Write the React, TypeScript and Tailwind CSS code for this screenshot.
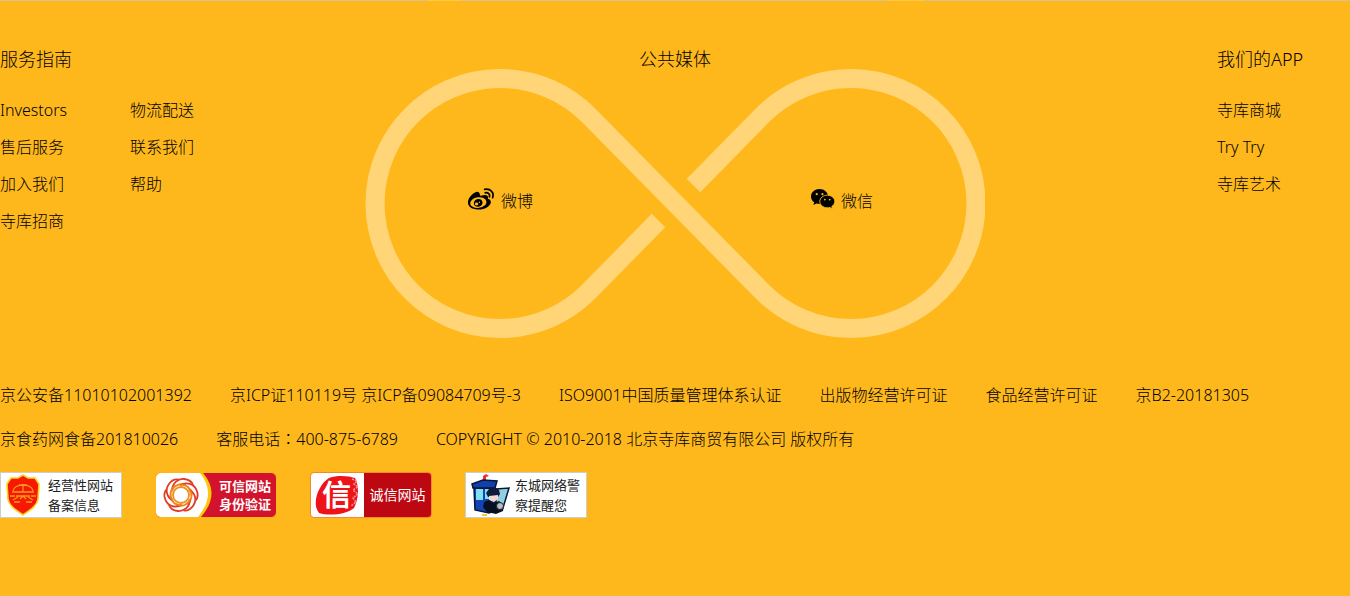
import type { ReactNode } from "react";

const guideLinks: string[][] = [
  ["Investors", "售后服务", "加入我们", "寺库招商"],
  ["物流配送", "联系我们", "帮助"],
];
const appLinks = ["寺库商城", "Try Try", "寺库艺术"];
const licences: { id: string; items: ReactNode[] }[] = [
  {
    id: "registrations",
    items: ["京公安备11010102001392", "京ICP证110119号 京ICP备09084709号-3", "ISO9001中国质量管理体系认证", "出版物经营许可证", "食品经营许可证", "京B2-20181305"],
  },
  {
    id: "contact",
    items: [
      "京食药网食备201810026",
      <>客服电话<span className="font-['Noto_Sans_CJK_TC',sans-serif] leading-none" lang="zh-Hant">：</span>400-875-6789</>,
      "COPYRIGHT © 2010-2018 北京寺库商贸有限公司 版权所有",
    ],
  },
];

function LinkList({ items }: { items: string[] }) {
  return (
    <ul>
      {items.map((t) => (
        <li key={t} className="h-[37px] leading-[37px]">
          <a href="#" className="whitespace-nowrap">{t}</a>
        </li>
      ))}
    </ul>
  );
}

function Loop() {
  return (
    <svg viewBox="0 0 620 270" className="absolute top-[26px] left-0 w-full" fill="none" stroke="#ffd577" strokeWidth="19" aria-hidden="true">
      <path d="M293.5 151.5 L223.4 222.9 A125 125 0 1 1 223.4 46.1 L397.6 222.9 A125 125 0 1 0 397.6 46.1 L328.5 116.5" />
    </svg>
  );
}

function WeiboIcon() {
  return (
    <svg viewBox="0 0 28 22" className="h-[22px] w-7" aria-hidden="true">
      <path d="M12 4.6C10.3 2.4 5.8 5.2 2.9 9C-1.2 14.4 1 21.3 10.8 21.6C18.6 21.8 24.4 17.4 23.8 13.4C23.5 11.7 22 11.1 20.8 10.7C21.6 8.3 20.6 5.5 13.8 7.7C12.6 8.1 13.2 6.2 12 4.6Z" />
      <ellipse cx="11.3" cy="14.6" rx="8.2" ry="5.3" fill="#ffb81c" transform="rotate(-8 11.3 14.6)" />
      <ellipse cx="11.2" cy="14.9" rx="4.4" ry="3.9" transform="rotate(-20 11.2 14.9)" />
      <ellipse cx="9.6" cy="16" rx="1.7" ry="1.4" fill="#ffb81c" />
      <circle cx="12.4" cy="14.2" r=".7" fill="#ffb81c" />
      <path d="M17.6 1.4C23.3 .1 27.4 4.5 25.6 9.6M18.2 4.8C21.2 4.2 23.2 6.2 22.4 8.8" fill="none" stroke="#000" strokeWidth="1.7" strokeLinecap="round" />
    </svg>
  );
}

function WechatIcon() {
  return (
    <svg viewBox="0 0 24 20" className="h-5 w-6" aria-hidden="true">
      <path d="M8.5 0C3.8 0 0 3.3 0 7.4C0 9.8 1.2 11.8 3.2 13.2L2.4 16L5.5 14.4C6.5 14.7 7.4 14.9 8.5 14.9C13.2 14.9 17 11.5 17 7.4S13.2 0 8.5 0Z" />
      <path d="M16.3 6.2C12.1 6.2 8.8 9 8.8 12.5S12.1 18.8 16.3 18.8C17.2 18.8 18 18.7 18.8 18.4L21.5 19.8L20.8 17.4C22.6 16.3 23.8 14.5 23.8 12.5C23.8 9 20.5 6.2 16.3 6.2Z" stroke="#ffb81c" strokeWidth=".9" />
      <circle cx="5.7" cy="5.2" r="1.1" fill="#ffb81c" />
      <circle cx="11.4" cy="5.2" r="1.1" fill="#ffb81c" />
      <circle cx="13.9" cy="10.6" r=".9" fill="#ffb81c" />
      <circle cx="18.7" cy="10.6" r=".9" fill="#ffb81c" />
    </svg>
  );
}

function ShieldArt() {
  return (
    <svg viewBox="0 0 34 42" className="h-[42px] w-[34px]" aria-hidden="true">
      <path d="M17 1L22 4L29 4L33 10L32 25C31 32 24 36 17 41C10 36 3 32 2 25L1 10L5 4L12 4Z" fill="#f61800" stroke="#ffd21c" strokeWidth="1.6" />
      <g fill="none" stroke="#ff9b16" strokeWidth="1.3">
        <path d="M7 17C8 9 26 9 27 17M13 11H21M17 10V18M6 18H28M10 22H24M7 26L12 23M27 26L22 23M8 28H14M20 28H26M14 25L17 22L20 25M4 22H9M25 22H30" />
      </g>
    </svg>
  );
}

function TrustedArt() {
  return (
    <svg viewBox="0 0 58 44" className="h-11 w-[58px]" aria-hidden="true">
      <path d="M0 0H47Q65 21 45 44H0Z" fill="#fdc70c" />
      <path d="M0 0H44Q61 21 42 44H0Z" fill="#fff" />
      <g fill="none" strokeWidth="1.8" transform="translate(25 22)">
        <circle r="8" stroke="#f0901f" />
        {[0, 60, 120, 180, 240, 300].map((a) => (
          <g key={a} transform={`rotate(${a})`}>
            <path d="M-9 -4C-9 -12 -3 -16.5 3 -16C8 -15.5 11 -13 12 -10" stroke="#e23b25" />
            <path d="M-9 -4C-7 -10 -1 -12 5 -10" stroke="#f0831d" />
          </g>
        ))}
      </g>
    </svg>
  );
}

function SealArt() {
  return (
    <svg viewBox="0 0 53 44" className="h-11 w-[53px]" aria-hidden="true">
      <path d="M18 5C27 2 37 3 44 5C49 15 47 27 43 35C35 42 17 43 8 40C0 30 8 11 18 5Z" fill="#ee1219" />
      <path d="M41 6L46 8L43 11L47 14L42 17L47 21L42 25L45 29L40 33" fill="none" stroke="#f49a9d" strokeWidth="1.5" strokeDasharray="2 1" />
      <text x="11" y="33" fontSize="29" fontWeight="700" fill="#fff">信</text>
    </svg>
  );
}

function PoliceArt() {
  return (
    <svg viewBox="0 0 40 42" className="h-[42px] w-10" aria-hidden="true">
      <path d="M12 7V2L15 0L18 2L15 3V7Z" fill="#f32b29" />
      <path d="M3 14H24V36L18 39L4 36Z" fill="#1542b5" stroke="#071536" strokeWidth="1.5" />
      <path d="M5 15H12V26H5Z M14 15H21V25H14Z" fill="#80e1f1" />
      <path d="M1 10L12 6L26 7L24 14H2Z" fill="#123fa9" stroke="#071536" strokeWidth="1.5" />
      <path d="M25 15L38 14L32 34L25 31Z" fill="#8fd0e2" stroke="#0b1630" strokeWidth="1.5" />
      <path d="M15 19L18 15Q24 12 28 16L29 20L27 23H17Z" fill="#101a3c" />
      <path d="M18 22L27 21L27 25L23 28L18 26Z" fill="#f3d9cd" />
      <path d="M13 28L18 26L23 29L28 27L33 31L32 37L25 40L16 38L12 33Z" fill="#071022" />
      <circle cx="29" cy="32" r="3.5" fill="#b9bcc2" stroke="#222" />
      <path d="M11 41H16" stroke="#f6c72b" strokeWidth="2" />
    </svg>
  );
}

function Badge({ art, lines, box, text }: { art: ReactNode; lines: string[]; box: string; text: string }) {
  return (
    <a href="#" className={`flex h-[46px] w-[122px] items-center overflow-hidden ${box}`}>
      {art}
      <span className={`flex flex-1 flex-col whitespace-nowrap ${text}`}>
        {lines.map((l) => <span key={l}>{l}</span>)}
      </span>
    </a>
  );
}

export default function App() {
  return (
    <footer className="min-h-screen overflow-hidden bg-[#ffb81c] font-['Noto_Sans','Noto_Sans_CJK_SC',sans-serif] text-base font-light text-black">
      <div className="flex h-px bg-[#d9c292]">
        <i className="ml-[428px] w-[34px] bg-[#ffc941]" />
        <i className="ml-[427px] w-[34px] bg-[#ffc941]" />
      </div>

      <div className="grid grid-cols-[1fr_620px_1fr] pt-[42px]">
        <nav aria-label="服务指南">
          <h2 className="h-8 text-lg leading-8">服务指南</h2>
          <div className="grid grid-cols-[130px_1fr] pt-[17px]">
            {guideLinks.map((col) => <LinkList key={col[0]} items={col} />)}
          </div>
        </nav>

        <section className="relative h-[300px]">
          <Loop />
          <h2 className="relative h-8 text-center text-lg leading-8">公共媒体</h2>
          <div className="relative grid grid-cols-[344px_1fr] pt-[109px] pl-[102px]">
            <a href="#" className="flex h-[30px] items-center gap-1.5">
              <WeiboIcon />
              <span className="pt-1">微博</span>
            </a>
            <a href="#" className="flex h-[30px] items-center gap-1.5">
              <WechatIcon />
              <span className="pt-1">微信</span>
            </a>
          </div>
        </section>

        <nav aria-label="我们的APP" className="w-[133px] justify-self-end">
          <h2 className="h-8 text-lg leading-8">我们的APP</h2>
          <div className="pt-[17px]">
            <LinkList items={appLinks} />
          </div>
        </nav>
      </div>

      <div className="pt-[30px]">
        {licences.map((row) => (
          <ul key={row.id} className="flex h-11 gap-[38px] leading-[44px] whitespace-nowrap">
            {row.items.map((t, i) => <li key={i}><a href="#">{t}</a></li>)}
          </ul>
        ))}
      </div>

      <div className="flex gap-[33px] pt-[11px]">
        <Badge art={<ShieldArt />} lines={["经营性网站", "备案信息"]} box="border border-[#cfcdc8] bg-white pl-[5px]" text="pl-2 text-[13px] leading-5 font-normal text-[#222]" />
        <Badge art={<TrustedArt />} lines={["可信网站", "身份验证"]} box="rounded-md border border-[#ffb81c] bg-[#d2132b]" text="items-center text-[13px] leading-[18px] font-bold text-white" />
        <Badge art={<SealArt />} lines={["诚信网站"]} box="rounded-sm border border-[#f28a2c] bg-[linear-gradient(90deg,#fff_53px,#bd0812_53px)]" text="items-center text-sm font-normal text-white" />
        <Badge art={<PoliceArt />} lines={["东城网络警", "察提醒您"]} box="border border-[#cfcdc8] bg-white pl-[5px]" text="pl-1 text-[13px] leading-5 font-normal text-[#222]" />
      </div>
    </footer>
  );
}
